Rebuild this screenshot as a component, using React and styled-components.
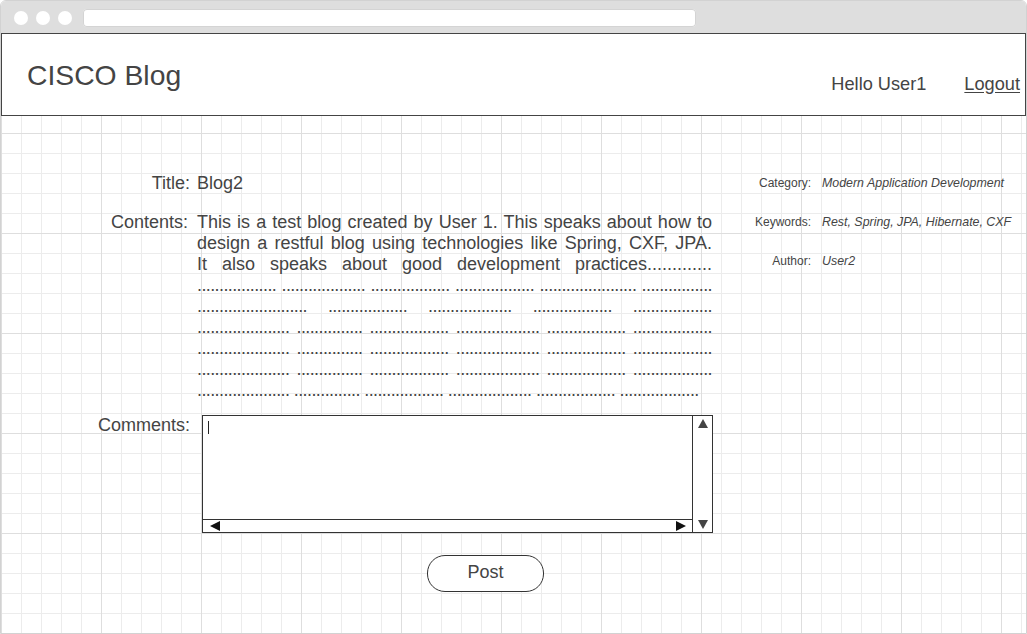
import React from 'react'
import styled, { createGlobalStyle } from 'styled-components'

const GlobalStyle = createGlobalStyle`
  html, body {
    margin: 0;
    padding: 0;
    background: #fff;
  }
  body {
    font-family: "Liberation Sans", Arial, sans-serif;
    color: #444;
  }
`

const Window = styled.div`
  width: 1027px;
  height: 634px;
  box-sizing: border-box;
  border: 1px solid #d2d2d2;
  border-radius: 6px 6px 0 0;
  display: flex;
  flex-direction: column;
  overflow: hidden;
`

const TitleBar = styled.div`
  height: 32px;
  flex-shrink: 0;
  background: #dedede;
  display: flex;
  align-items: center;
  gap: 8px;
  padding: 1px 0 0 13px;
  box-sizing: border-box;
`

const Dot = styled.span`
  width: 14px;
  height: 14px;
  border-radius: 50%;
  background: #fff;
`

const AddressBar = styled.div`
  width: 613px;
  height: 18px;
  margin-left: 3px;
  background: #fff;
  border-radius: 4px;
  box-shadow: inset 0 0 0 1px #d4d4d4;
`

const Header = styled.header`
  height: 83px;
  flex-shrink: 0;
  box-sizing: border-box;
  border: 1px solid #444;
  background: #fff;
  display: flex;
  align-items: center;
  justify-content: space-between;
  padding: 0 5px 0 25px;
`

const Logo = styled.h1`
  margin: 0;
  font-size: 28.3px;
  font-weight: normal;
  line-height: 32px;
  color: #444;
`

const Nav = styled.nav`
  display: flex;
  gap: 38px;
  margin-top: 19px;
  font-size: 18.2px;
  line-height: 21px;
`

const NavLink = styled.a`
  color: #444;
  text-decoration: underline;
  text-underline-offset: 2px;
`

const Content = styled.main`
  flex: 1;
  display: flex;
  align-items: flex-start;
  padding-top: 57px;
  background-color: #fff;
  background-image:
    linear-gradient(to right, #dedede 1px, transparent 1px),
    linear-gradient(to bottom, #dedede 1px, transparent 1px),
    linear-gradient(to right, #ececec 1px, transparent 1px),
    linear-gradient(to bottom, #ececec 1px, transparent 1px);
  background-size: 100px 100px, 100px 100px, 20px 20px, 20px 20px;
  background-position: 0 17px;
`

const Form = styled.section`
  display: flex;
  flex-direction: column;
`

const Row = styled.div`
  display: grid;
  grid-template-columns: 189px 515px;
  column-gap: 7px;
  align-items: start;
  margin-top: ${(p) => p.$gap || 0}px;
  font-size: 18px;
  line-height: 21px;
`

const Label = styled.div`
  text-align: right;
  padding-right: ${(p) => p.$inset || 0}px;
`

const Body = styled.div`
  display: flex;
  flex-direction: column;
`

const Line = styled.div`
  text-align: justify;
  text-align-last: ${(p) => (p.$last ? 'left' : 'justify')};
`

const Dots = styled.span`
  letter-spacing: -0.6px;
`

const TextBox = styled.div`
  margin-left: 5px;
  width: 511px;
  height: 118px;
  box-sizing: border-box;
  border: 1px solid #333;
  background: #fff;
  display: grid;
  grid-template-columns: 489px 20px;
  grid-template-rows: 103px 13px;
`

const Editor = styled.div`
  padding: 5px 0 0 5px;
`

const Caret = styled.span`
  display: block;
  width: 1px;
  height: 13px;
  background: #222;
`

const VScroll = styled.div`
  grid-column: 2;
  grid-row: 1 / span 2;
  border-left: 1px solid #333;
  display: flex;
  flex-direction: column;
  justify-content: space-between;
  align-items: center;
  padding: 3px 0 3px;
`

const HScroll = styled.div`
  grid-column: 1;
  grid-row: 2;
  border-top: 1px solid #333;
  display: flex;
  justify-content: space-between;
  align-items: center;
  padding: 0 6px 0 7px;
`

const Arrow = styled.svg`
  display: block;
  fill: ${(p) => p.$fill || '#444'};
`

const ButtonRow = styled.div`
  margin: 22px 0 0 426px;
`

const PostButton = styled.button`
  width: 117px;
  height: 37px;
  border: 1px solid #333;
  border-radius: 18px;
  background: #fff;
  font-family: "Liberation Sans", Arial, sans-serif;
  font-size: 18px;
  color: #444;
  padding: 0 0 2px;
`

const Meta = styled.aside`
  display: grid;
  grid-template-columns: 99px auto;
  column-gap: 11px;
  row-gap: 18px;
  font-size: 12px;
  line-height: 21px;
`

const MetaLabel = styled.div`
  text-align: right;
`

const MetaValue = styled.div`
  font-style: italic;
  font-size: 12.4px;
  white-space: nowrap;
`

const dotLines = [
  [18, 19, 18, 18, 22, 16],
  [25, 18, 19, 18, 18],
  [21, 15, 18, 19, 18, 18],
  [21, 15, 18, 19, 18, 18],
  [21, 15, 18, 19, 18, 18],
  [21, 15, 18, 19, 18, 18],
]

const meta = [
  ['Category:', 'Modern Application Development'],
  ['Keywords:', 'Rest, Spring, JPA, Hibernate, CXF'],
  ['Author:', 'User2'],
]

function Tri({ dir, fill }) {
  const pts = {
    up: '5,0 10,9 0,9',
    down: '0,0 10,0 5,9',
    left: '0,5 10,0 10,10',
    right: '0,0 10,5 0,10',
  }
  const vertical = dir === 'up' || dir === 'down'
  return (
    <Arrow $fill={fill} width={10} height={vertical ? 9 : 10} viewBox={vertical ? '0 0 10 9' : '0 0 10 10'}>
      <polygon points={pts[dir]} />
    </Arrow>
  )
}

export default function App() {
  return (
    <>
      <GlobalStyle />
      <Window>
        <TitleBar>
          <Dot />
          <Dot />
          <Dot />
          <AddressBar />
        </TitleBar>
        <Header>
          <Logo>CISCO Blog</Logo>
          <Nav>
            <span>Hello User1</span>
            <NavLink href="#">Logout</NavLink>
          </Nav>
        </Header>
        <Content>
          <Form>
            <Row>
              <Label>Title:</Label>
              <div>Blog2</div>
            </Row>
            <Row $gap={18}>
              <Label $inset={2}>Contents:</Label>
              <Body>
                <Line>This is a test blog created by User 1. This speaks about how to</Line>
                <Line>design a restful blog using technologies like Spring, CXF, JPA.</Line>
                <Line>It also speaks about good development practices.............</Line>
                {dotLines.map((groups, i) => (
                  <Line key={i} $last={i === dotLines.length - 1}>
                    <Dots>{groups.map((n) => '.'.repeat(n)).join(' ')}</Dots>
                  </Line>
                ))}
              </Body>
            </Row>
            <Row $gap={14}>
              <Label>Comments:</Label>
              <TextBox>
                <Editor>
                  <Caret />
                </Editor>
                <VScroll>
                  <Tri dir="up" />
                  <Tri dir="down" />
                </VScroll>
                <HScroll>
                  <Tri dir="left" fill="#111" />
                  <Tri dir="right" fill="#111" />
                </HScroll>
              </TextBox>
            </Row>
            <ButtonRow>
              <PostButton>Post</PostButton>
            </ButtonRow>
          </Form>
          <Meta>
            {meta.map(([k, v]) => (
              <React.Fragment key={k}>
                <MetaLabel>{k}</MetaLabel>
                <MetaValue>{v}</MetaValue>
              </React.Fragment>
            ))}
          </Meta>
        </Content>
      </Window>
    </>
  )
}
